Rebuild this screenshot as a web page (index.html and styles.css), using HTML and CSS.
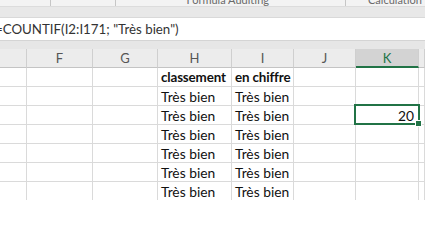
FILE: index.html
```html
<!DOCTYPE html>
<html>
<head>
<meta charset="utf-8">
<link rel="stylesheet" href="styles.css">
</head>
<body>
<div class="ribbon">
  <div class="grp g1"></div>
  <div class="grp g2"></div>
  <div class="grp g3"><span>Formula Auditing</span></div>
  <div class="grp g4"><span>Calculation</span></div>
</div>
<div class="gap1"></div>
<div class="formula"><span>=COUNTIF(I2:I171; "Très bien")</span></div>
<div class="gap2"></div>
<div class="sheet">
  <div class="hd"></div><div class="hd">F</div><div class="hd">G</div><div class="hd">H</div><div class="hd">I</div><div class="hd">J</div><div class="hd sel">K</div><div class="hd"></div>

  <div class="c"></div><div class="c"></div><div class="c"></div><div class="c b">classement</div><div class="c b">en chiffre</div><div class="c"></div><div class="c"></div><div class="c"></div>

  <div class="c"></div><div class="c"></div><div class="c"></div><div class="c">Très bien</div><div class="c">Très bien</div><div class="c"></div><div class="c"></div><div class="c"></div>

  <div class="c"></div><div class="c"></div><div class="c"></div><div class="c">Très bien</div><div class="c">Très bien</div><div class="c"></div><div class="c num active">20</div><div class="c"></div>

  <div class="c"></div><div class="c"></div><div class="c"></div><div class="c">Très bien</div><div class="c">Très bien</div><div class="c"></div><div class="c"></div><div class="c"></div>

  <div class="c"></div><div class="c"></div><div class="c"></div><div class="c">Très bien</div><div class="c">Très bien</div><div class="c"></div><div class="c"></div><div class="c"></div>

  <div class="c"></div><div class="c"></div><div class="c"></div><div class="c">Très bien</div><div class="c">Très bien</div><div class="c"></div><div class="c"></div><div class="c"></div>

  <div class="c"></div><div class="c"></div><div class="c"></div><div class="c">Très bien</div><div class="c">Très bien</div><div class="c"></div><div class="c"></div><div class="c"></div>
</div>
</body>
</html>
```

FILE: styles.css
```css
html, body {
  margin: 0;
  padding: 0;
  width: 425px;
  height: 200px;
  overflow: hidden;
  background: #ffffff;
  font-family: Lato, "Liberation Sans", sans-serif;
}
.ribbon {
  height: 7px;
  background: #f3f3f3;
  display: flex;
  overflow: hidden;
  border-bottom: 1px solid #dcdcdc;
  box-sizing: border-box;
}
.grp {
  height: 6px;
  border-right: 1px solid #c6c6c6;
  box-sizing: border-box;
  font-size: 11px;
  color: #6a6a6a;
  white-space: nowrap;
}
.grp span {
  display: block;
  line-height: 11px;
  margin-top: -6px;
}
.g1 { width: 51px; }
.g2 { width: 65px; }
.g3 { width: 230px; text-align: right; padding-right: 76px; }
.g4 { flex: 1; border-right: none; padding-left: 22px; }
.gap1 {
  height: 10px;
  background: #e8e8e8;
}
.formula {
  height: 23px;
  background: #ffffff;
  border-top: 1px solid #d9d9d9;
  box-sizing: border-box;
  overflow: hidden;
  white-space: nowrap;
  font-size: 13.3px;
  color: #333333;
  line-height: 22px;
}
.formula span {
  margin-left: -5px;
}
.gap2 {
  height: 9px;
  background: #e6e6e6;
  border-top: 1px solid #d4d4d4;
  box-sizing: border-box;
}
.sheet {
  display: grid;
  grid-template-columns: 27px 66px 65px 74px 62px 62px 63px 6px;
  grid-auto-rows: 19px;
}
.hd {
  background: #ececec;
  border-right: 1px solid #cfcfcf;
  border-bottom: 1px solid #c4c4c4;
  box-sizing: border-box;
  text-align: center;
  font-size: 13px;
  line-height: 18px;
  color: #555555;
}
.hd.sel {
  background: #d3d3d3;
  color: #217346;
  border-bottom: 2px solid #217346;
}
.c {
  border-right: 1px solid #dadada;
  border-bottom: 1px solid #dadada;
  box-sizing: border-box;
  font-size: 13.8px;
  line-height: 19px;
  color: #111111;
  padding-left: 3px;
  white-space: nowrap;
  overflow: hidden;
}
.c.b {
  font-weight: bold;
  font-size: 13.4px;
  letter-spacing: -0.15px;
}
.c.num {
  text-align: right;
  padding-right: 4px;
  padding-left: 0;
}
.c.active {
  position: relative;
  overflow: visible;
}
.c.active::after {
  content: "";
  position: absolute;
  left: -2px;
  top: -2px;
  right: -2px;
  bottom: -1px;
  border: 2px solid #217346;
}
.c.active::before {
  content: "";
  position: absolute;
  right: -4px;
  bottom: -3px;
  width: 5px;
  height: 5px;
  background: #217346;
  border: 1px solid #ffffff;
  z-index: 2;
}
```
